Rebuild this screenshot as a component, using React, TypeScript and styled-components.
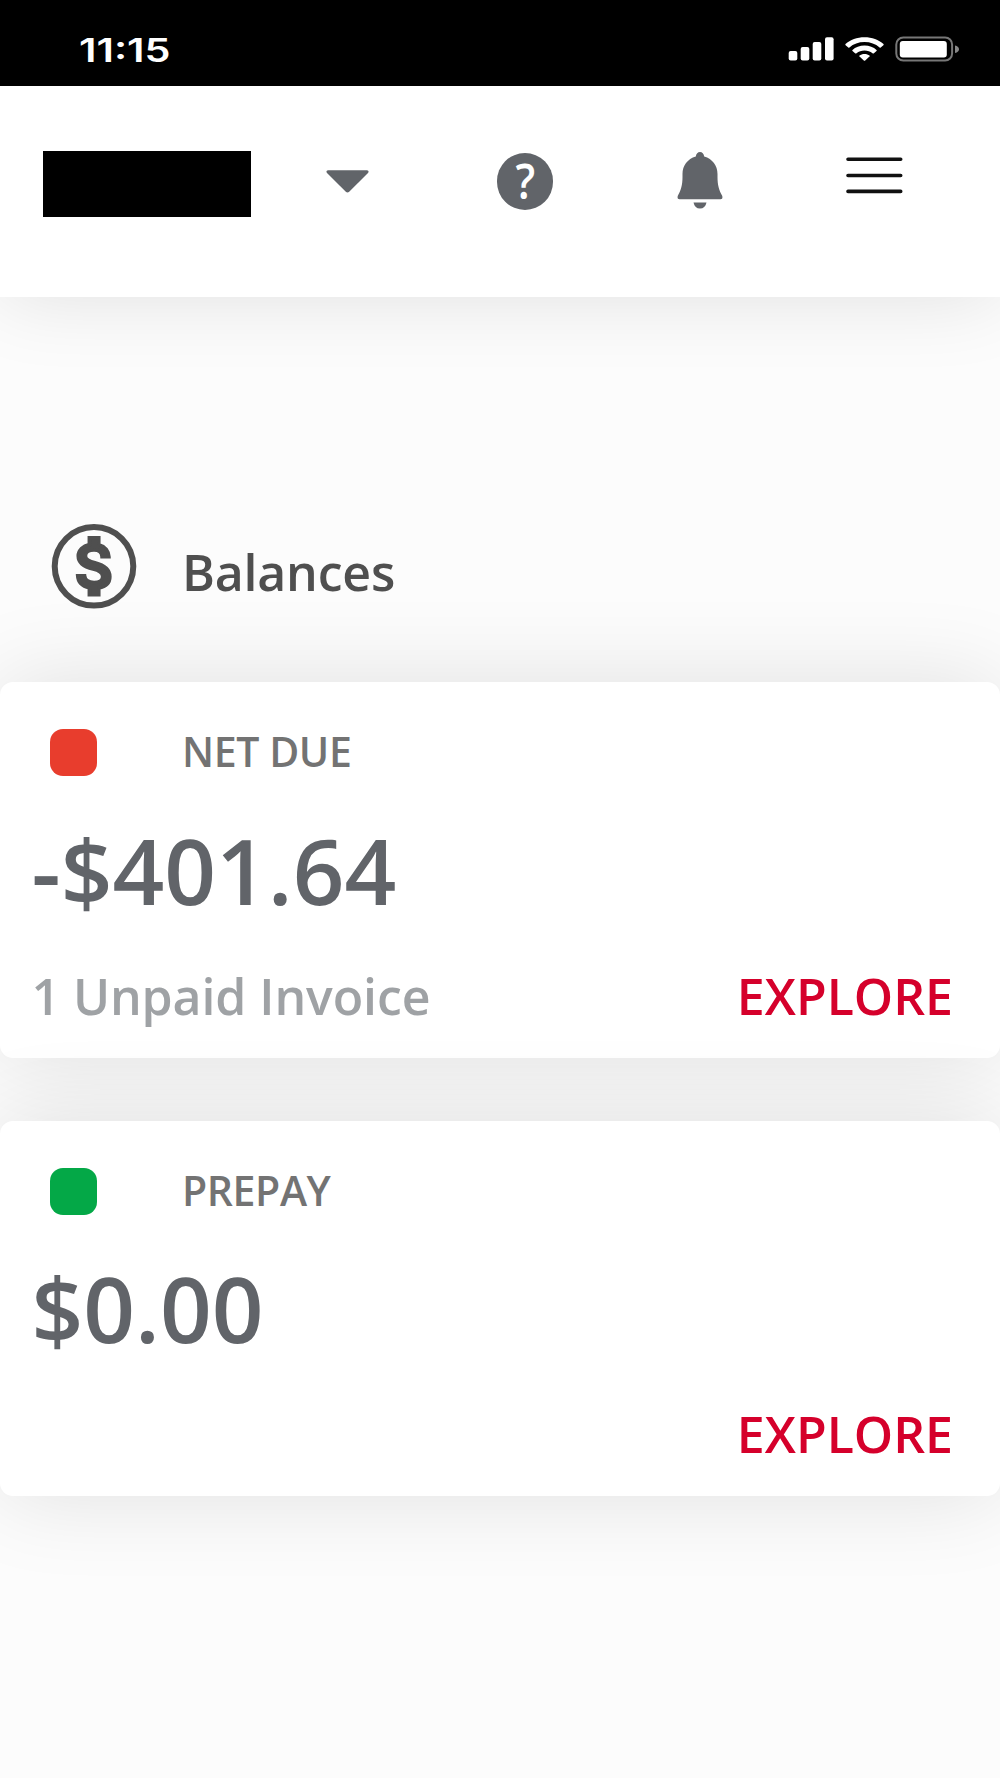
import React from 'react';
import styled, { createGlobalStyle } from 'styled-components';

const GlobalStyle = createGlobalStyle`
  * { box-sizing: border-box; }
  body {
    margin: 0;
    background: #fcfcfc;
    font-family: 'Open Sans', 'Noto Sans', sans-serif;
  }
  svg { display: block; flex: none; }
`;

const Screen = styled.div`
  width: 1000px;
  height: 1778px;
  overflow: hidden;
  background: #fcfcfc;
`;

const StatusBar = styled.div`
  height: 86px;
  background: #000;
  padding: 12px 40px 0 79px;
  display: flex;
  align-items: center;
  justify-content: space-between;
`;

const Clock = styled.span`
  padding-top: 3px;
  font: 600 32.5px/40px Inter, sans-serif;
  color: #fff;
  transform: scaleX(1.27);
  transform-origin: left;
`;

const StatusIcons = styled.div`
  display: flex;
  align-items: center;
  gap: 11px;
`;

const Header = styled.header`
  height: 211px;
  background: #fff;
  box-shadow: 0 0 80px rgba(0, 0, 0, 0.115);
  display: flex;
  align-items: flex-start;
  padding: 64.5px 0 0 43px;
`;

const AccountName = styled.div`
  width: 208px;
  height: 66px;
  background: #000;
`;

const HeaderButton = styled.button<{ $left: number; $top: number }>`
  margin: ${(p) => p.$top}px 0 0 ${(p) => p.$left}px;
  padding: 0;
  border: 0;
  background: none;
  color: #616469;
`;

const HelpBadge = styled.span`
  display: block;
  width: 56.5px;
  height: 56.5px;
  border-radius: 50%;
  background: #616469;
  color: #fff;
  font: 600 48px/55px 'Open Sans', sans-serif;
  text-align: center;
`;

const HelpMark = styled.span`
  display: block;
  transform: scaleX(0.9);
`;

const SectionTitle = styled.h1`
  margin: 0;
  padding: 226px 0 0 51px;
  height: 385px;
  display: flex;
  align-items: flex-start;
  gap: 45px;
  color: #4f4f4f;
  font-size: 50px;
  font-weight: 600;
  line-height: 70px;
  letter-spacing: -0.2px;
`;

const TitleText = styled.span`
  margin-top: 14px;
`;

const Cards = styled.main`
  display: flex;
  flex-direction: column;
  gap: 63px;
`;

const Card = styled.section`
  height: 375.5px;
  border-radius: 13px;
  background: #fff;
  box-shadow: 0 0 90px rgba(0, 0, 0, 0.115);
  padding: 40.5px 47px 0 31.5px;
  display: flex;
  flex-direction: column;
  font-weight: 600;
`;

const CardHeading = styled.div`
  height: 60px;
  display: flex;
  align-items: center;
  gap: 85px;
  padding-left: 18.5px;
`;

const Swatch = styled.span<{ $color: string }>`
  width: 47px;
  height: 47px;
  border-radius: 13px;
  background: ${(p) => p.$color};
`;

const CardLabel = styled.span`
  margin-top: -3px;
  font-size: 41px;
  letter-spacing: -0.4px;
  color: #737373;
`;

const Amount = styled.div`
  margin-top: 32px;
  font-size: 90.6px;
  line-height: 110px;
  color: #616469;
`;

const CardFooter = styled.div`
  margin-top: 36px;
  display: flex;
  justify-content: space-between;
  font-size: 50px;
  line-height: 70px;
`;

const Note = styled.span`
  letter-spacing: -0.1px;
  color: #9fa2a5;
`;

const Explore = styled.a`
  color: #d5002b;
`;

const SignalIcon = () => (
  <svg width="46" height="25" viewBox="0 0 46 25" fill="#fff">
    <rect x="0.7" y="14" width="8.6" height="9.5" rx="2" />
    <rect x="12.7" y="10" width="8.6" height="13.5" rx="2" />
    <rect x="24.7" y="5" width="8.6" height="18.5" rx="2" />
    <rect x="37" y="0.2" width="8.6" height="23.3" rx="2" />
  </svg>
);

const WifiIcon = () => (
  <svg width="39" height="25" viewBox="0 0 39 25" fill="#fff">
    <path d="M19.5 0.3C27 .3 33.7 2.7 38.5 7.1Q39 7.7 38.4 8.2L35.7 10.5Q35.2 10.9 34.6 10.4C30.5 7 25.5 5 19.5 5S8.5 7 4.4 10.4Q3.8 10.9 3.3 10.5L.6 8.2Q0 7.7 .5 7.1C5.3 2.7 12 .3 19.5 .3Z" />
    <path d="M19.5 8.6C24.3 8.6 28.5 10.2 31.5 12.9Q32.1 13.5 31.5 14L28.6 16.4Q28.1 16.8 27.5 16.3C25.3 14.5 22.6 13.5 19.5 13.5S13.7 14.5 11.5 16.3Q10.9 16.8 10.4 16.4L7.5 14Q6.9 13.5 7.5 12.9C10.5 10.2 14.7 8.6 19.5 8.6Z" />
    <path d="M19.5 16.9C21.5 16.9 23.2 17.5 24.5 18.6Q25 19.1 24.5 19.6L20.2 23.4Q19.5 24 18.8 23.4L14.5 19.6Q14 19.1 14.5 18.6C15.8 17.5 17.5 16.9 19.5 16.9Z" />
  </svg>
);

const BatteryIcon = () => (
  <svg width="65" height="26" viewBox="0 0 65 26">
    <rect x="1.3" y="1.5" width="55.8" height="23" rx="7" fill="none" stroke="#777" strokeWidth="2" />
    <rect x="4.8" y="5" width="47" height="16.5" rx="3" fill="#fff" />
    <path d="M60 9.5Q64 10.5 64 13.2T60 17Z" fill="#888" />
  </svg>
);

const CaretIcon = () => (
  <svg width="43" height="23" viewBox="0 0 43 23" fill="currentColor">
    <path d="M2 .3H41Q43.5 .8 42 3L23.2 21.8Q21.5 23.4 19.8 21.8L1 3Q-.5 .8 2 .3Z" />
  </svg>
);

const BellIcon = () => (
  <svg width="46" height="57" viewBox="0 0 46 57" fill="currentColor">
    <path d="M23 0C25.3 0 26.7 1.5 27.2 4.5C35.5 7 40.5 13.5 40.5 22V25C40.5 33 42 38 45.3 44Q46 47.3 43.5 47.3H2.5Q0 47.3 .7 44C4 38 5.5 33 5.5 25V22C5.5 13.5 10.5 7 18.8 4.5C19.3 1.5 20.7 0 23 0Z" />
    <path d="M16.5 50.5H29.5C28.5 54.5 26.5 56.5 23 56.5S17.5 54.5 16.5 50.5Z" />
  </svg>
);

const MenuIcon = () => (
  <svg width="57" height="37" viewBox="0 0 57 37" stroke="#111" strokeWidth="3.6" strokeLinecap="round">
    <path d="M2 2.2H54.7M2 18.5H54.7M2 34.4H54.7" />
  </svg>
);

const DollarIcon = () => (
  <svg width="86" height="86" viewBox="0 0 86 86">
    <circle cx="43" cy="43.3" r="39.3" fill="none" stroke="#4f4f4f" strokeWidth="6" />
    <g transform="translate(6.6 5.2) scale(3.17)" fill="#4f4f4f" stroke="#4f4f4f" strokeWidth="1.1">
      <path d="M11.8 10.9c-2.27-.59-3-1.2-3-2.15 0-1.09 1.01-1.85 2.7-1.85 1.78 0 2.44.85 2.5 2.1h2.21c-.07-1.72-1.12-3.3-3.21-3.81V3h-3v2.16c-1.94.42-3.5 1.68-3.5 3.61 0 2.31 1.91 3.46 4.7 4.13 2.5.6 3 1.48 3 2.41 0 .69-.49 1.79-2.7 1.79-2.06 0-2.87-.92-2.98-2.1h-2.2c.12 2.19 1.76 3.42 3.68 3.83V21h3v-2.15c1.95-.37 3.5-1.5 3.5-3.55 0-2.84-2.43-3.81-4.7-4.4z" />
    </g>
  </svg>
);

type Balance = { label: string; color: string; amount: string; note?: string };

const balances: Balance[] = [
  { label: 'NET DUE', color: '#e83d2d', amount: '-$401.64', note: '1 Unpaid Invoice' },
  { label: 'PREPAY', color: '#04a847', amount: '$0.00' },
];

export default function App() {
  return (
    <Screen>
      <GlobalStyle />
      <StatusBar>
        <Clock>11:15</Clock>
        <StatusIcons>
          <SignalIcon />
          <WifiIcon />
          <BatteryIcon />
        </StatusIcons>
      </StatusBar>
      <Header>
        <AccountName />
        <HeaderButton $left={75} $top={19.5} aria-label="Switch account"><CaretIcon /></HeaderButton>
        <HeaderButton $left={127.5} $top={2.5} aria-label="Help"><HelpBadge><HelpMark>?</HelpMark></HelpBadge></HeaderButton>
        <HeaderButton $left={123.5} $top={1.5} aria-label="Notifications"><BellIcon /></HeaderButton>
        <HeaderButton $left={123.5} $top={6.5} aria-label="Menu"><MenuIcon /></HeaderButton>
      </Header>
      <SectionTitle>
        <DollarIcon />
        <TitleText>Balances</TitleText>
      </SectionTitle>
      <Cards>
        {balances.map((b) => (
          <Card key={b.label}>
            <CardHeading>
              <Swatch $color={b.color} />
              <CardLabel>{b.label}</CardLabel>
            </CardHeading>
            <Amount>{b.amount}</Amount>
            <CardFooter>
              <Note>{b.note}</Note>
              <Explore>EXPLORE</Explore>
            </CardFooter>
          </Card>
        ))}
      </Cards>
    </Screen>
  );
}
